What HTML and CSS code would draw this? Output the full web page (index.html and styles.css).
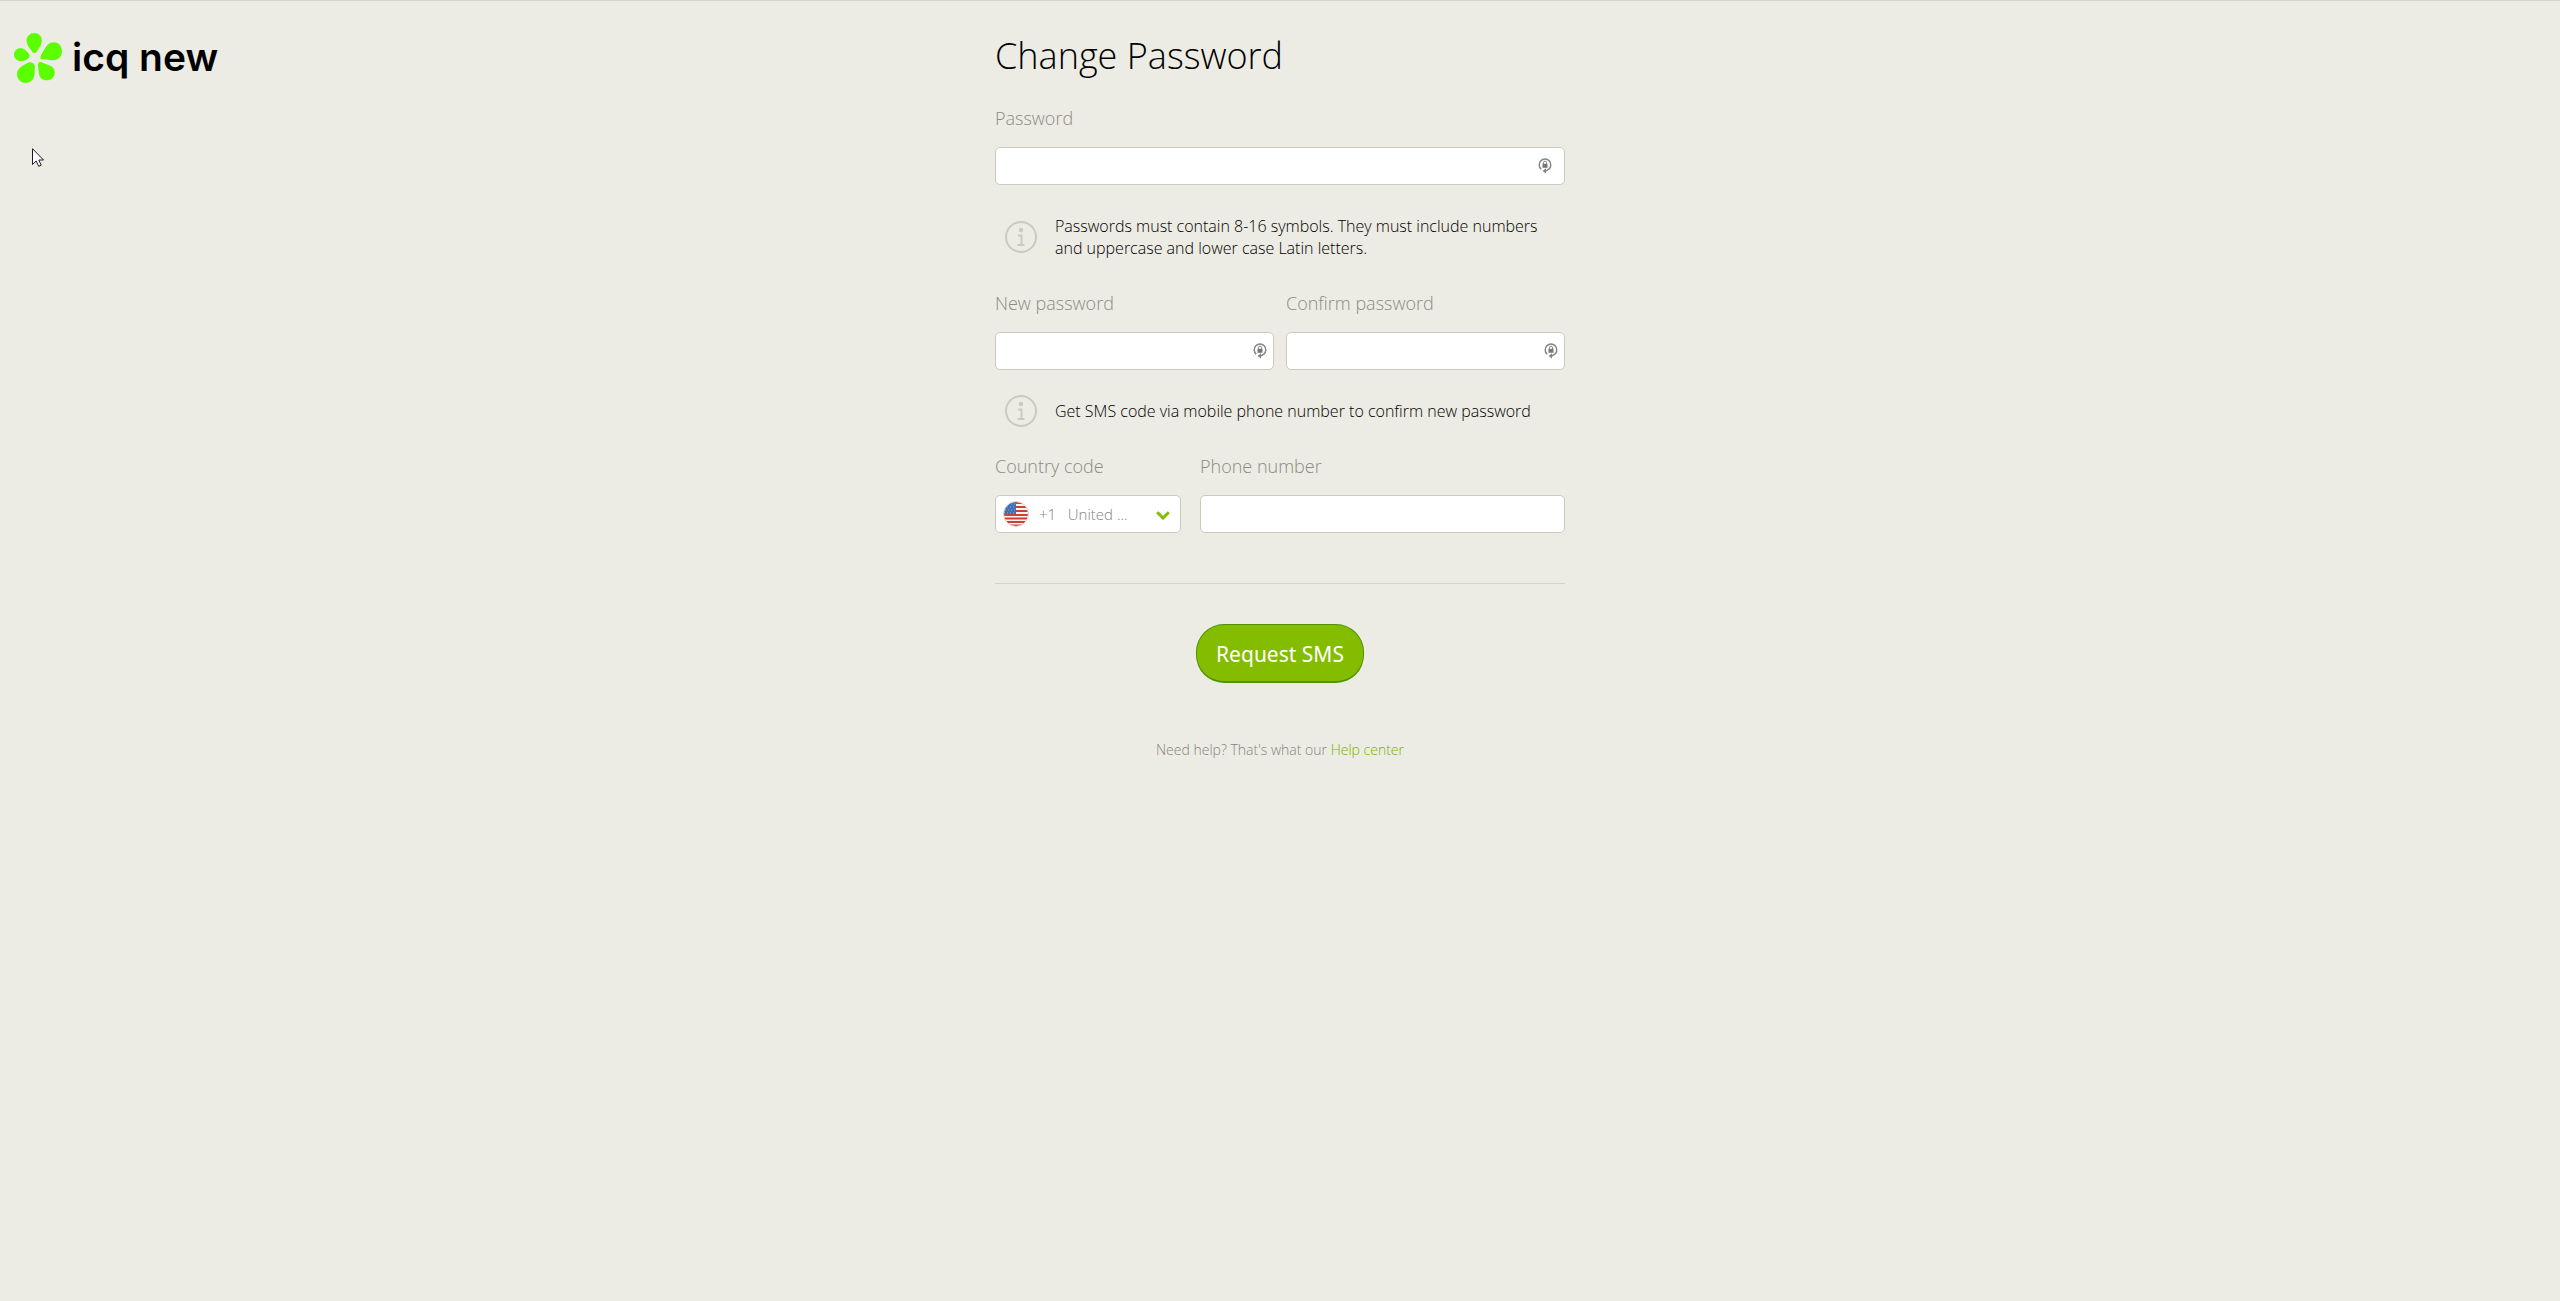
FILE: index.html
```html
<!DOCTYPE html>
<html lang="en">
<head>
    <meta charset="UTF-8">
    <meta name="viewport" content="width=device-width, initial-scale=1.0">
    <title>Change Password</title>
    <link rel="stylesheet" href="styles.css">
</head>
<body>

<!-- Shared icons -->
<svg class="sprite" aria-hidden="true">
    <symbol id="icon-info" viewBox="0 0 32 32">
        <circle cx="16" cy="16" r="15" fill="none" stroke="#cbcabc" stroke-width="2"/>
        <circle cx="16" cy="9" r="2.200" fill="#cbcabc"/>
        <path d="M13 14.500h3.500v9.500M12.500 24h7" fill="none" stroke="#cbcabc" stroke-width="2"/>
    </symbol>
    <symbol id="icon-lock" viewBox="0 0 14 17">
        <path d="M3.200 12.200A5.800 5.800 0 1 1 10.800 12.200L8 13.800" fill="none" stroke="#858585" stroke-width="1.500"/>
        <path d="M4.500 14l3.500-2.800v1.800l1 .8-1 .8v1.900z" fill="#858585"/>
        <path d="M5.400 7V5.800a1.600 1.600 0 0 1 3.200 0V7" fill="none" stroke="#858585"/>
        <path d="M4.500 6.800h5v4h-5z" fill="#777"/>
    </symbol>
</svg>

<header class="header">
    <a class="logo" href="#">
        <svg class="logo-flower" viewBox="42 98 145 151" aria-hidden="true" fill="#5bff00">
            <path d="M80 121C80 108 90 98 103 98C117 98 126 108 126 121C126 135 116 147 110 155C107 160 102 160 98 155C91 147 80 135 80 121Z"/>
            <path d="M122 174C120 168 132 150 140 138C146 129 154 126 163 126C177 126 187 138 187 153C187 169 176 180 160 180C150 180 140 178 128 177C124 177 122 176 122 174Z"/>
            <path d="M42 163C42 152 51 143 62 143C72 143 78 150 84 157C91 165 91 171 84 176C78 180 72 183 62 183C51 183 42 174 42 163Z"/>
            <path d="M51 222C51 209 58 204 68 197L85 187C93 184 104 189 105 198L104 222C103 238 92 249 77 249C62 249 51 237 51 222Z"/>
            <path d="M114 192C117 183 124 185 132 189L150 196C160 201 165 207 165 217C165 231 154 241 141 241C127 241 117 231 117 217L114 195Z"/>
        </svg>
        <span class="logo-text">icq new</span>
    </a>
</header>

<main class="content">
    <h1 class="title">Change Password</h1>
    <form class="form">
        <div class="field">
            <label for="password">Password</label>
            <div class="control">
                <input id="password" type="password">
                <svg class="lock lock-wide" aria-hidden="true"><use href="#icon-lock"/></svg>
            </div>
        </div>

        <div class="info">
            <svg class="info-icon" aria-hidden="true"><use href="#icon-info"/></svg>
            <p>Passwords must contain 8-16 symbols. They must include numbers and uppercase and lower case Latin letters.</p>
        </div>

        <div class="row">
            <div class="field">
                <label for="new-password">New password</label>
                <div class="control">
                    <input id="new-password" type="password">
                    <svg class="lock" aria-hidden="true"><use href="#icon-lock"/></svg>
                </div>
            </div>
            <div class="field">
                <label for="confirm-password">Confirm password</label>
                <div class="control">
                    <input id="confirm-password" type="password">
                    <svg class="lock" aria-hidden="true"><use href="#icon-lock"/></svg>
                </div>
            </div>
        </div>

        <div class="info">
            <svg class="info-icon" aria-hidden="true"><use href="#icon-info"/></svg>
            <p>Get SMS code via mobile phone number to confirm new password</p>
        </div>

        <div class="row row-phone">
            <div class="field field-country">
                <label for="country">Country code</label>
                <div class="control">
                    <select id="country">
                        <option>+1&nbsp;&nbsp; United ...</option>
                    </select>
                    <svg class="flag" viewBox="0 0 26 26" aria-hidden="true">
                        <clipPath id="round"><circle cx="13" cy="13" r="12"/></clipPath>
                        <g clip-path="url(#round)">
                            <path d="M0 0h26v26H0z" fill="#f7f3f0"/>
                            <path d="M0 2h26M0 6h26M0 10h26M0 14h26M0 17.500h26M0 21h26M0 24.500h26" stroke="#d03f33" stroke-width="1.800"/>
                            <path d="M0 0h13v13H0z" fill="#3f6fb4"/>
                            <path d="M2 3h11M1 6h12M2 9h11M1 12h12" stroke="#8fb0dc" stroke-dasharray="1 2"/>
                        </g>
                        <circle cx="13" cy="13" r="12.500" fill="none" stroke="#d5d2c8"/>
                    </svg>
                    <svg class="arrow" viewBox="0 0 14 9" aria-hidden="true">
                        <path d="M1.200 1.300L7 7l5.800-5.700" fill="none" stroke="#84bd00" stroke-width="3"/>
                    </svg>
                </div>
            </div>
            <div class="field">
                <label for="phone">Phone number</label>
                <div class="control">
                    <input id="phone" type="tel">
                </div>
            </div>
        </div>

        <div class="actions">
            <button class="button" type="button">Request SMS</button>
        </div>
    </form>
    <p class="help">Need help? That's what our <a href="#">Help center</a></p>
</main>

<svg class="cursor" viewBox="0 0 12 19" aria-hidden="true">
    <path d="M.5.700V16.500L4.200 13L6.700 18.300L9.200 17.200L6.800 12H11.500Z" fill="#fff" stroke="#1a1a2a"/>
</svg>

</body>
</html>
```
FILE: styles.css
```css
* {
    box-sizing: border-box;
}

body {
    margin: 0;
    min-height: 100vh;
    display: grid;
    grid-template-columns: 1fr 570px 1fr;
    align-items: start;
    border-top: 1px solid #d5d4ca;
    background: #edece4;
    color: #000;
    font-family: "Open Sans", sans-serif;
    font-weight: 300;
}

.sprite {
    position: absolute;
    width: 0;
    height: 0;
}

/* Logo */
.header {
    padding: 32px 14px;
}

.logo {
    display: inline-flex;
    align-items: flex-start;
    gap: 10px;
    color: #000;
    text-decoration: none;
}

.logo-flower {
    width: 48px;
    height: 50px;
}

.logo-text {
    font-family: Inter, sans-serif;
    font-size: 39px;
    font-weight: 600;
    line-height: 48px;
}

/* Form */
.content {
    padding-top: 31px;
}

.title {
    margin: 0 0 26px;
    font-size: 36px;
    font-weight: 300;
    line-height: 48px;
}

.row {
    display: flex;
    gap: 12px;
}

.row-phone {
    gap: 19px;
}

.field {
    flex: 1;
}

.field-country {
    flex: 0 0 186px;
}

.field label {
    display: block;
    margin-bottom: 17px;
    color: #8c8b82;
    font-size: 18px;
    line-height: 24px;
}

.control {
    position: relative;
}

.control input,
.control select {
    display: block;
    width: 100%;
    height: 38px;
    padding: 0 12px;
    border: 1px solid #cbcabc;
    border-radius: 5px;
    background: #fff;
    font-family: inherit;
    font-size: 16px;
    font-weight: 300;
}

.control select {
    padding: 0 36px 0 43px;
    appearance: none;
    color: #85847b;
    font-size: 15px;
}

.lock {
    position: absolute;
    top: 10px;
    right: 7px;
    width: 14px;
    height: 17px;
}

.lock-wide {
    right: 13px;
}

.flag {
    position: absolute;
    top: 6px;
    left: 8px;
    width: 26px;
    height: 26px;
    pointer-events: none;
}

.arrow {
    position: absolute;
    top: 16px;
    right: 11px;
    width: 14px;
    height: 9px;
    pointer-events: none;
}

.info {
    display: flex;
    align-items: center;
    gap: 18px;
    margin: 30px 0 32px;
    padding-left: 10px;
}

.info-icon {
    flex: none;
    width: 32px;
    height: 32px;
    margin: -5px 0;
}

.info p {
    margin: 0;
    font-size: 16px;
    line-height: 22px;
}

.actions {
    margin-top: 50px;
    padding-top: 40px;
    border-top: 1px solid #d5d4ca;
    text-align: center;
}

.button {
    height: 59px;
    padding: 2px 19px 0;
    border: 1px solid #4f9400;
    border-bottom-width: 2px;
    border-radius: 28px;
    background: #84bd00;
    color: #fff;
    font-family: "Noto Sans", sans-serif;
    font-size: 21px;
}

.help {
    margin: 57px 0 0;
    color: #85847b;
    font-size: 14px;
    line-height: 20px;
    text-align: center;
}

.help a {
    color: #7ab000;
    text-decoration: none;
}

.cursor {
    position: absolute;
    top: 148px;
    left: 32px;
    width: 12px;
    height: 19px;
    pointer-events: none;
}
```
